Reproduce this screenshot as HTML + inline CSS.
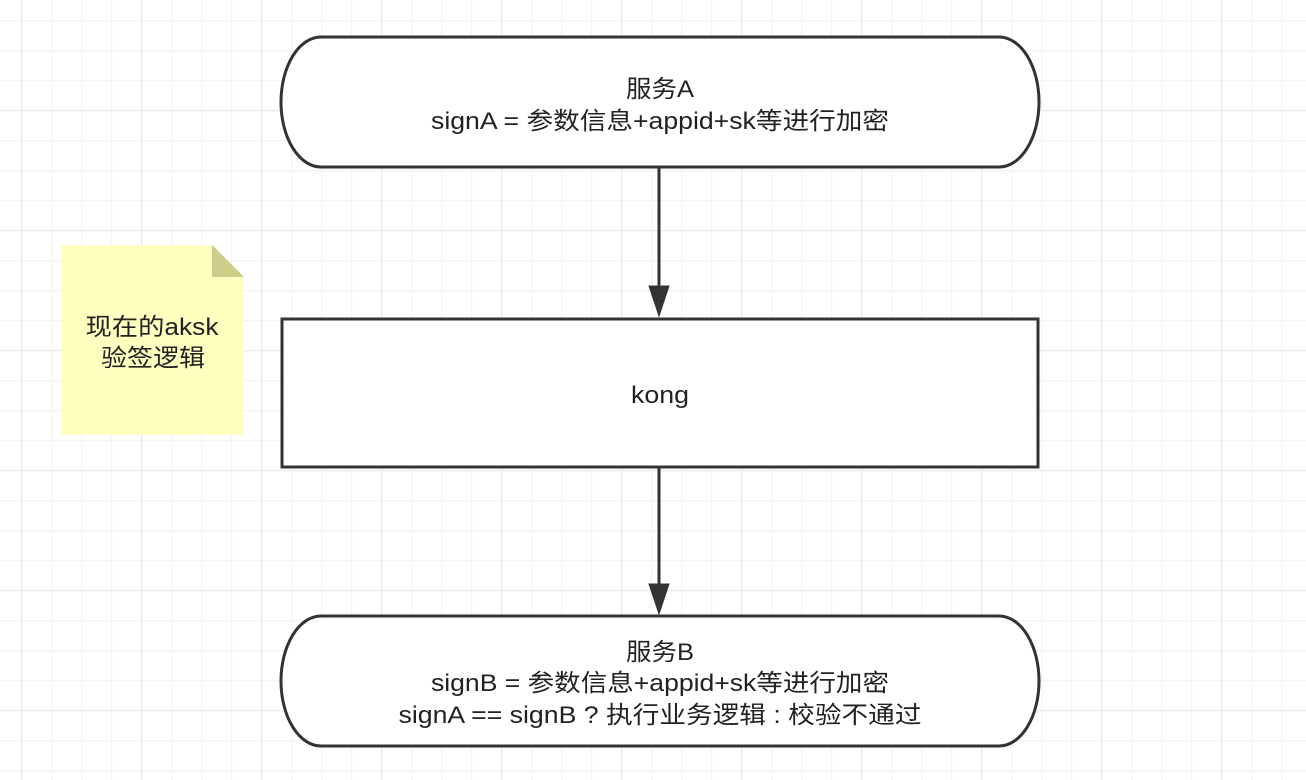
<!DOCTYPE html>
<html><head><meta charset="utf-8"><style>
html,body{margin:0;padding:0;background:#fff;}
svg{display:block}
text{font-family:"Liberation Sans","Noto Sans CJK SC",sans-serif;fill:#222;}
</style></head><body>
<svg width="1306" height="780" viewBox="0 0 1306 780" xmlns="http://www.w3.org/2000/svg">
<defs>
<pattern id="minor" width="30" height="30" patternUnits="userSpaceOnUse" x="21" y="20">
<path d="M0 0.5H30M0.5 0V30" stroke="#f3f3f3" stroke-width="1.5" fill="none"/>
</pattern>
<pattern id="major" width="120" height="120" patternUnits="userSpaceOnUse" x="21" y="110">
<path d="M0 0.5H120M0.5 0V120" stroke="#eaeaea" stroke-width="1.5" fill="none"/>
</pattern>
</defs>
<rect width="1306" height="780" fill="#fff"/>
<rect width="1306" height="780" fill="url(#minor)"/>
<rect width="1306" height="780" fill="url(#major)"/>

<path d="M321 37H999A40 65 0 0 1 999 167H321A40 65 0 0 1 321 37Z" fill="#fff" stroke="#333" stroke-width="3"/>
<text x="660" y="97" font-size="24" text-anchor="middle" textLength="68" lengthAdjust="spacingAndGlyphs">服务A</text>
<text x="660" y="129" font-size="24" text-anchor="middle" textLength="458" lengthAdjust="spacingAndGlyphs">signA = 参数信息+appid+sk等进行加密</text>

<line x1="659" y1="168" x2="659" y2="292" stroke="#333" stroke-width="3"/>
<path d="M649 286L669 286L659 316Z" fill="#333" stroke="#333" stroke-width="1"/>

<rect x="282" y="319" width="756" height="148" fill="#fff" stroke="#333" stroke-width="3"/>
<text x="660" y="403" font-size="24" text-anchor="middle" textLength="58" lengthAdjust="spacingAndGlyphs">kong</text>

<line x1="659" y1="468" x2="659" y2="590" stroke="#333" stroke-width="3"/>
<path d="M649 584L669 584L659 614Z" fill="#333" stroke="#333" stroke-width="1"/>

<path d="M321 616H999A40 65 0 0 1 999 746H321A40 65 0 0 1 321 616Z" fill="#fff" stroke="#333" stroke-width="3"/>
<text x="660" y="660" font-size="24" text-anchor="middle" textLength="68" lengthAdjust="spacingAndGlyphs">服务B</text>
<text x="660" y="691" font-size="24" text-anchor="middle" textLength="458" lengthAdjust="spacingAndGlyphs">signB = 参数信息+appid+sk等进行加密</text>
<text x="660" y="723" font-size="24" text-anchor="middle" textLength="523" lengthAdjust="spacingAndGlyphs">signA == signB ? 执行业务逻辑 : 校验不通过</text>

<path d="M62 245H212L244 277V435H62Z" fill="#ffffc0"/>
<path d="M212 245V277H244Z" fill="#cdcd88"/>
<text x="152" y="335" font-size="24" text-anchor="middle" textLength="133" lengthAdjust="spacingAndGlyphs">现在的aksk</text>
<text x="153" y="366" font-size="24" text-anchor="middle" textLength="104" lengthAdjust="spacingAndGlyphs">验签逻辑</text>
</svg>
</body></html>
